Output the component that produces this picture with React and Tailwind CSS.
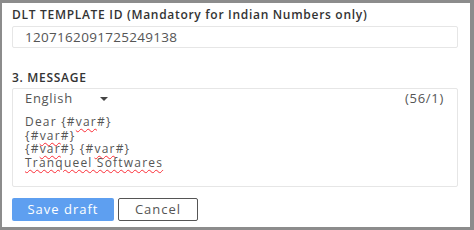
import React from "react";

const Var = () => (
  <>
    {"{#"}
    <span className="underline decoration-wavy decoration-red-500 decoration-1 underline-offset-2">var</span>
    {"#}"}
  </>
);

const App = () => {
  return (
    <div className="w-[474px] h-[230px] bg-[#8c8c8c] pt-[3px] pl-[2px] pr-[4px] pb-[3px]" style={{ fontFamily: '"Open Sans", sans-serif' }}>
      <div className="h-full bg-white px-[10px] pt-[4px]">
        {/* DLT template id */}
        <div className="text-[12px] font-semibold text-[#333] leading-[16px] tracking-[0.7px]">
          DLT TEMPLATE ID (Mandatory for Indian Numbers only)
        </div>
        <div className="mt-[3px] h-[22px] w-[446px] border border-[#e6e6e6] rounded-[2px] px-[12px] flex items-center text-[13.5px] tracking-[0.3px] text-[#555]">
          1207162091725249138
        </div>

        {/* Message */}
        <div className="mt-[22px] text-[12px] font-semibold text-[#333] leading-[16px] tracking-[0.7px]">
          3. MESSAGE
        </div>
        <div className="mt-[2px] h-[99px] w-[446px] border border-[#e6e6e6] rounded-[2px] px-[12px] pt-[1px]">
          <div className="flex items-center justify-between text-[13px] tracking-[0.7px] text-[#555] h-[18px]">
            <div className="flex items-center">
              <span>English</span>
              <span className="ml-[27px] w-0 h-0 border-l-[4px] border-r-[4px] border-t-[4px] border-l-transparent border-r-transparent border-t-[#444]" />
            </div>
            <span className="mr-[1px]">(56/1)</span>
          </div>
          <div className="mt-[7px] text-[12px] tracking-[1.2px] text-[#555] leading-[13.5px]">
            <div>Dear <Var /></div>
            <div><Var /></div>
            <div><Var /> <Var /></div>
            <div>
              <span className="underline decoration-wavy decoration-red-500 decoration-1 underline-offset-2">Tranqueel Softwares</span>
            </div>
          </div>
        </div>

        {/* Buttons */}
        <div className="mt-[11px] flex gap-[4px]">
          <button className="w-[102px] h-[23px] bg-[#5e9ff0] text-white text-[13px] font-medium tracking-[1px] rounded-[2px]">
            Save draft
          </button>
          <button className="w-[80px] h-[23px] border border-[#555] text-[#555] text-[13px] tracking-[1px] rounded-[2px] bg-white">
            Cancel
          </button>
        </div>
      </div>
    </div>
  );
};

export default App;
